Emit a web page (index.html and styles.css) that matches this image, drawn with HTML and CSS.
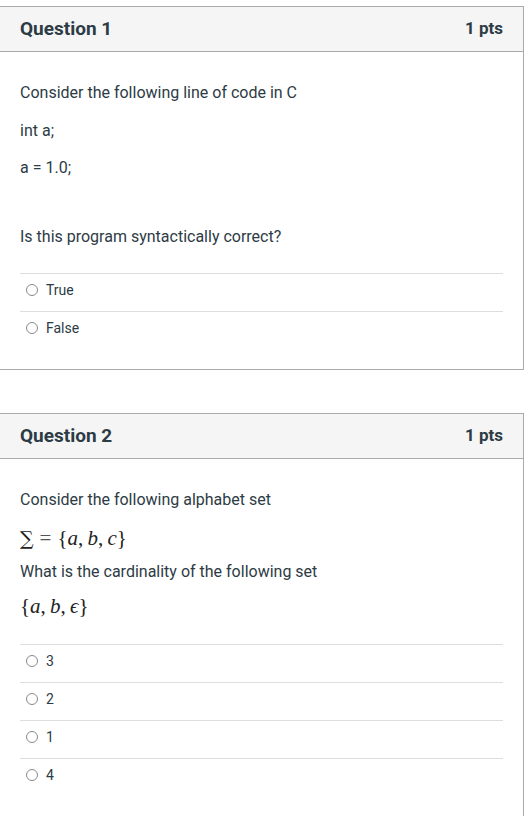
FILE: index.html
```html
<!DOCTYPE html>
<html>
<head>
<meta charset="utf-8">
<link rel="stylesheet" href="styles.css">
</head>
<body>
<div class="page">
  <section class="card">
    <header class="card-head">
      <h2 class="title">Question 1</h2>
      <span class="pts">1 pts</span>
    </header>
    <div class="card-body">
      <p>Consider the following line of code in C</p>
      <p>int a;</p>
      <p>a = 1.0;</p>
      <p class="after-gap">Is this program syntactically correct?</p>
      <ul class="answers">
        <li><span class="radio"></span>True</li>
        <li><span class="radio"></span>False</li>
      </ul>
    </div>
  </section>

  <section class="card">
    <header class="card-head">
      <h2 class="title">Question 2</h2>
      <span class="pts">1 pts</span>
    </header>
    <div class="card-body">
      <p>Consider the following alphabet set</p>
      <p class="math"><span class="sum">∑</span><span class="eq">=</span><span class="br">{</span><i>a</i>,&#8201;<i>b</i>,&#8201;<i>c</i><span class="br">}</span></p>
      <p>What is the cardinality of the following set</p>
      <p class="math math-last"><span class="br">{</span><i>a</i>,&#8201;<i>b</i>,&#8201;<i>ϵ</i><span class="br">}</span></p>
      <ul class="answers answers-tight">
        <li><span class="radio"></span>3</li>
        <li><span class="radio"></span>2</li>
        <li><span class="radio"></span>1</li>
        <li><span class="radio"></span>4</li>
      </ul>
    </div>
  </section>
</div>
</body>
</html>
```

FILE: styles.css
```css
html, body {
  margin: 0;
  padding: 0;
  background: #ffffff;
}
body {
  font-family: Roboto, "Liberation Sans", sans-serif;
  color: #2d3b45;
}
.page {
  display: flex;
  flex-direction: column;
  gap: 43px;
  padding-top: 6px;
  margin-left: -1px;
  width: 525px;
}
.card {
  border: 1px solid #aaaaaa;
  background: #fff;
}
.card-head {
  display: flex;
  justify-content: space-between;
  align-items: center;
  padding: 0 20px 2px 20px;
  box-sizing: border-box;
  height: 45px;
  background: #f5f5f5;
  border-bottom: 1px solid #aaaaaa;
}
.title {
  margin: 0;
  font-size: 19px;
  font-weight: 700;
  color: #2d3b45;
}
.pts {
  font-size: 17px;
  font-weight: 700;
  color: #2d3b45;
}
.card-body {
  padding: 16px 20px 20px 20px;
}
.card-body p {
  margin: 12px 0;
  font-size: 16px;
  line-height: 25.6px;
}
.card-body p.after-gap {
  margin-top: 43px;
}
.card-body p.math {
  font-family: "Liberation Serif", "DejaVu Serif", serif;
  font-size: 21px;
  line-height: 18px;
  margin: 16px 0 12px;
  color: #222;
}
.card-body p.math-last {
  margin-top: 12px;
}
.math i {
  font-style: italic;
}
.sum {
  font-family: "DejaVu Serif", serif;
  font-size: 19px;
}
.eq {
  margin: 0 6px;
  color: #555;
}
.answers {
  list-style: none;
  margin: 24px 0 0;
  padding: 0;
}
.answers-tight {
  margin-top: 29px;
}
.answers li {
  display: flex;
  align-items: center;
  gap: 8px;
  border-top: 1px solid #dddddd;
  padding: 6px 0 11px 6px;
  font-size: 14px;
  line-height: 20px;
  color: #2d3b45;
}
.radio {
  width: 10px;
  height: 10px;
  border: 1px solid #8a8a8a;
  border-radius: 50%;
  flex: none;
}
```
